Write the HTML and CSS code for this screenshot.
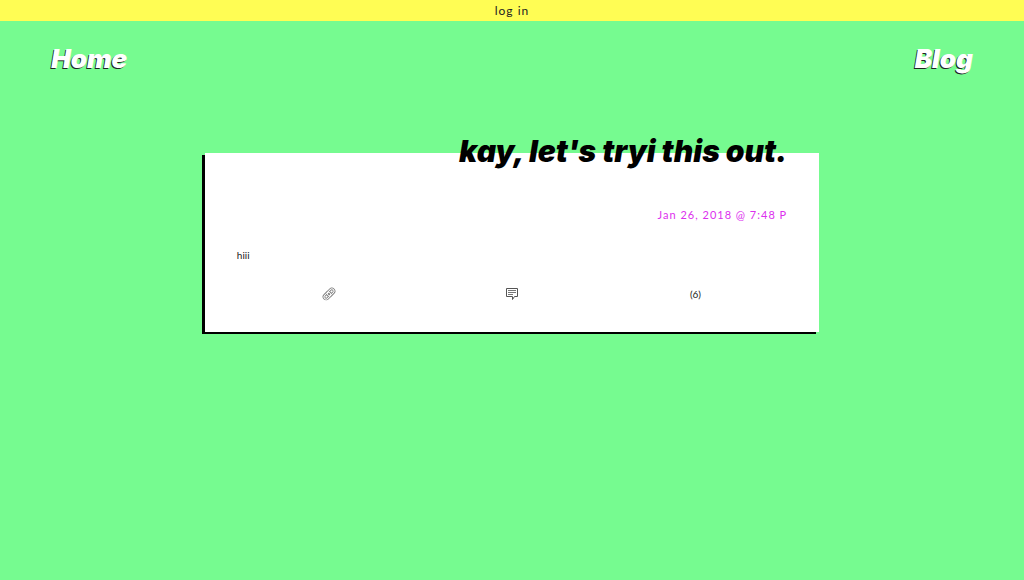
FILE: index.html
```
<!DOCTYPE html>
<html lang="en">
<head>
<meta charset="utf-8">
<meta name="viewport" content="width=device-width, initial-scale=1">
<title>Blog</title>
<link rel="stylesheet" href="styles.css">
</head>
<body>
<header>
  <div class="login-bar"><a href="#">log in</a></div>
  <nav class="site-nav">
    <a href="#">Home</a>
    <a href="#">Blog</a>
  </nav>
</header>
<main>
  <article class="post">
    <h1 class="post-title">kay, let's tryi this out.</h1>
    <time class="post-date" datetime="2018-01-26T19:48">Jan 26, 2018 @ 7:48 P</time>
    <p class="post-body">hiii</p>
    <footer class="post-actions">
      <a href="#" aria-label="Permalink">
        <svg class="icon" viewBox="0 0 14 14" aria-hidden="true">
          <g transform="rotate(-45 7 7)" fill="none">
            <g stroke="#777" stroke-width="2.6">
              <rect x="0.8" y="4.8" width="7.6" height="4.4" rx="2.2"/>
              <rect x="5.6" y="4.8" width="7.6" height="4.4" rx="2.2"/>
            </g>
            <g stroke="#fff" stroke-width="1">
              <rect x="0.8" y="4.8" width="7.6" height="4.4" rx="2.2"/>
              <rect x="5.6" y="4.8" width="7.6" height="4.4" rx="2.2"/>
            </g>
          </g>
        </svg>
      </a>
      <a href="#" aria-label="Comment">
        <svg class="icon" viewBox="0 0 14 14" fill="none" stroke="#555" aria-hidden="true">
          <path d="M1.500 1.500h11v8H9.500L7.500 12.500V9.500H1.500z"/>
          <path d="M3 3.500h8M3 5.500h8M3 7.500h5" stroke="#777"/>
        </svg>
      </a>
      <span>(6)</span>
    </footer>
  </article>
</main>
</body>
</html>
```
FILE: styles.css
```
* {
  box-sizing: border-box;
}

body {
  margin: 0;
  background: #76fb90;
  color: #222;
  font-family: Lato, sans-serif;
  font-size: 10px;
  line-height: 16px;
}

a {
  color: inherit;
  text-decoration: none;
}

.login-bar {
  background: #fffd54;
  font-size: 12px;
  line-height: 21px;
  letter-spacing: 1px;
  text-align: center;
}

.site-nav {
  display: flex;
  justify-content: space-between;
  padding: 20px 5% 0;
  color: #fff;
  font-family: Inter, sans-serif;
  font-size: 26px;
  font-style: italic;
  font-weight: 900;
  line-height: 36px;
  text-shadow: -1px 1px 0 #222;
}

.post {
  display: flex;
  flex-direction: column;
  width: 60%;
  margin: 76px auto 32px;
  padding: 0 32px 30px;
  background: #fff;
  box-shadow: -3px 2px 0 #000;
}

.post-title {
  margin: -22px 0 0;
  color: #000;
  font-family: Inter, sans-serif;
  font-size: 30px;
  font-style: italic;
  font-weight: 900;
  line-height: 40px;
  text-align: right;
}

.post-date {
  margin-top: 36px;
  color: #dc30ee;
  font-size: 11px;
  letter-spacing: 1px;
  text-align: right;
}

.post-body {
  margin: 24px 0 23px;
}

.post-actions {
  display: grid;
  grid-template-columns: repeat(3, 1fr);
  justify-items: center;
  align-items: center;
}

.icon {
  display: block;
  width: 14px;
  height: 14px;
}
```
